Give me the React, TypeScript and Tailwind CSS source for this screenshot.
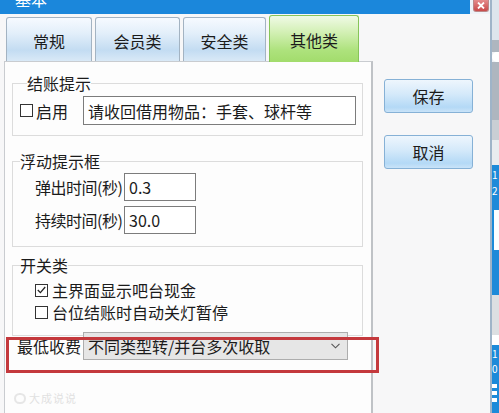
import React from "react";

const font = "font-['Noto_Sans_CJK_SC','Noto_Sans',sans-serif]";

const tabs = [
	{ label: "常规", width: "w-[86px]" },
	{ label: "会员类", width: "w-[85px]" },
	{ label: "安全类", width: "w-[83px]" },
];

export default function App() {
	return (
		<div className={`flex h-[413px] w-[499px] overflow-hidden bg-[#eef1f4] text-[#1b1b1b] ${font}`}>
			<div className="flex w-[492px] flex-col border-r-2 border-[#9fb4c8]">
				{/* title bar */}
				<div className="flex h-[14px] shrink-0">
					<div className="w-[470px] overflow-hidden bg-[#1b87db] pl-[15px]">
						<p className="-mt-[9px] text-[16px] leading-[16px] text-white">基本</p>
					</div>
					<div className="flex flex-1 bg-[#eef3f8] pl-[3px]">
						<div className="flex h-[12px] w-[16px] items-center justify-center rounded-b-[3px] border border-t-0 border-[#b88] bg-[linear-gradient(#e58c8c,#c94a4a)]">
							<svg width="8" height="7" viewBox="0 0 8 7">
								<path d="M1 0.5 L7 6.5 M7 0.5 L1 6.5" stroke="white" strokeWidth="1.8" />
							</svg>
						</div>
					</div>
				</div>

				<div className="flex flex-1 bg-[#f7f7f8]">
					{/* left: tabs + page */}
					<div className="flex w-[373px] flex-col pl-[4px]">
						<div className="flex h-[47px] shrink-0 items-end gap-[3px] pl-[2px]">
							{tabs.map((tab) => (
								<div
									key={tab.label}
									className={`${tab.width} flex h-[44px] items-center justify-center rounded-t-[3px] border border-b-0 border-[#a3b3c2] bg-[linear-gradient(#f6faff,#e3effa_35%,#c3dcf2_75%,#d9e9f7)] pt-[3px] text-[16px] leading-[20px]`}
								>
									{tab.label}
								</div>
							))}
							<div className="relative z-10 -mb-[1px] flex h-[47px] w-[90px] items-center justify-center rounded-t-[3px] border border-b-0 border-[#86c559] bg-[linear-gradient(#f0fae6,#d3f0b5_35%,#ade27c_75%,#a2dc6c)] pt-[1px] text-[16px] leading-[20px]">
								其他类
							</div>
						</div>

						<div className="relative flex flex-1 flex-col border border-b-0 border-r-2 border-[#c9ccd0] border-r-[#bfc2c6] bg-[#fdfdfd] pl-[7px] pr-[8px]">
							{/* 结账提示 */}
							<fieldset className="mt-[13px] border border-[#dcdcdc] pb-[10px] pl-[7px]">
								<legend className="ml-[7px] text-[16px] leading-[16px]">结账提示</legend>
								<div className="mt-[5px] flex items-center">
									<Check />
									<span className="ml-[3px] text-[16px] leading-[20px]">启用</span>
									<div className="ml-[15px] flex h-[29px] w-[273px] items-center border border-[#7c7c7c] bg-white pl-[4px] text-[16px] leading-[20px]">
										请收回借用物品：手套、球杆等
									</div>
								</div>
							</fieldset>

							{/* 浮动提示框 */}
							<fieldset className="mt-[17px] border border-[#dcdcdc] pb-[12px] pl-[22px]">
								<legend className="-ml-[15px] text-[16px] leading-[16px]">浮动提示框</legend>
								<div className="mt-[4px] flex flex-col gap-[5px]">
									<TimeRow label="弹出时间(秒)" value="0.3" />
									<TimeRow label="持续时间(秒)" value="30.0" />
								</div>
							</fieldset>

							{/* 开关类 */}
							<fieldset className="mt-[10px] border border-[#dcdcdc] pb-[12px] pl-[22px]">
								<legend className="-ml-[15px] text-[16px] leading-[16px]">开关类</legend>
								<div className="mt-[6px] flex flex-col">
									<div className="flex h-[22px] items-center">
										<Check checked />
										<span className="ml-[4px] text-[16px] leading-[20px]">主界面显示吧台现金</span>
									</div>
									<div className="flex h-[22px] items-center">
										<Check />
										<span className="ml-[4px] text-[16px] leading-[20px]">台位结账时自动关灯暂停</span>
									</div>
								</div>
							</fieldset>

							<div className="-mt-[4px] -ml-[7px] flex items-center pl-[12px]">
								<span className="w-[66px] whitespace-nowrap text-[16px] leading-[20px]">最低收费</span>
								<div className="flex h-[28px] w-[265px] items-center justify-between border border-[#adadad] bg-[#e6e6e6] pl-[4px] pr-[7px] text-[16px] leading-[20px]">
									<span>不同类型转/并台多次收取</span>
									<svg width="9" height="6" viewBox="0 0 9 6">
										<path d="M0.5 0.8 L4.5 4.8 L8.5 0.8" fill="none" stroke="#555" strokeWidth="1.1" />
									</svg>
								</div>
							</div>

							<div className="mt-[31px] flex items-center gap-[3px] pl-[2px] opacity-60">
								<div className="h-[11px] w-[12px] rounded-full border-2 border-[#d8d8d8]" />
								<span className="text-[11px] leading-[14px] tracking-[1px] text-[#cfcfcf]">大成说说</span>
							</div>

							{/* highlight annotation */}
							<div className="pointer-events-none absolute left-[1px] top-[275px] h-[36px] w-[373px] border-[3px] border-[#c4393d]" />
						</div>
					</div>

					{/* right: buttons */}
					<div className="ml-[11px] flex flex-col gap-[22px] pt-[65px]">
						<Btn label="保存" />
						<Btn label="取消" />
					</div>
				</div>
			</div>

			{/* what shows of the window behind */}
			<div className="flex w-[7px] flex-col text-[10px] leading-[12px] text-white">
				<div className="h-[40px] bg-[#dde5ec]" />
				<div className="h-[12px] bg-[#aeb6bf]" />
				<div className="h-[10px] rounded-l-full bg-white" />
				<div className="h-[58px] bg-[#aeb6bf]" />
				<div className="h-[20px] bg-[#c9ced4]" />
				<div className="h-[25px] bg-[#e9ecef]" />
				<div className="flex h-[45px] flex-col gap-[4px] overflow-hidden bg-[#1d8ad9] pt-[4px]">
					<span>1</span>
					<span>2</span>
				</div>
				<div className="h-[40px] border-l-2 border-[#1d8ad9] bg-white" />
				<div className="h-[45px] bg-[#1d8ad9]" />
				<div className="h-[40px] bg-[#dcdfe2]" />
				<div className="h-[10px] bg-white" />
				<div className="flex flex-1 flex-col gap-[3px] overflow-hidden bg-[#1d8ad9] pt-[3px]">
					<span>1</span>
					<span>0</span>
					<div className="mt-[6px] h-[4px] w-[5px] shrink-0 bg-white" />
					<div className="h-[4px] w-[5px] shrink-0 bg-white" />
					<div className="h-[4px] w-[5px] shrink-0 bg-white" />
				</div>
			</div>
		</div>
	);
}

function Check({ checked }: { checked?: boolean }) {
	return (
		<span className="flex h-[13px] w-[13px] shrink-0 items-center justify-center border border-[#333] bg-white">
			{checked && (
				<svg width="9" height="8" viewBox="0 0 9 8">
					<path d="M0.8 4 L3.4 6.6 L8.2 1" fill="none" stroke="#222" strokeWidth="1.3" />
				</svg>
			)}
		</span>
	);
}

function TimeRow({ label, value }: { label: string; value: string }) {
	return (
		<div className="flex items-center">
			<span className="w-[89px] shrink-0 whitespace-nowrap text-[16px] leading-[20px] tracking-[-0.5px]">{label}</span>
			<div className="flex h-[28px] w-[72px] items-center border border-[#7c7c7c] bg-white pl-[4px] text-[16px] leading-[20px]">
				{value}
			</div>
		</div>
	);
}

function Btn({ label }: { label: string }) {
	return (
		<button
			type="button"
			className="flex h-[34px] w-[89px] items-center justify-center rounded-[3px] border border-[#86b1d6] bg-[linear-gradient(#eef6fd,#d4e9fa_45%,#b4d9f6_85%,#c9e3f8)] text-[16px] leading-[20px] text-[#1b1b1b]"
		>
			{label}
		</button>
	);
}
